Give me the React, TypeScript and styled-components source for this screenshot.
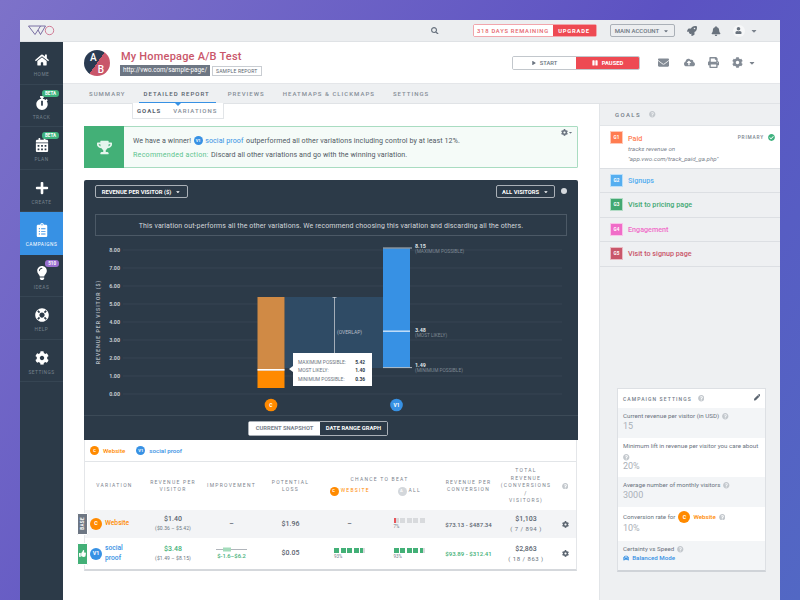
import React from 'react'
import styled, { createGlobalStyle } from 'styled-components'
import {
  FaBell, FaCalendarAlt, FaCar, FaCaretDown, FaCheckCircle, FaClipboardList, FaCloudUploadAlt, FaCog,
  FaEnvelope, FaHome, FaLifeRing, FaLightbulb, FaPause, FaPen, FaPlay, FaPlus, FaPrint, FaQuestionCircle,
  FaRocket, FaSearch, FaStopwatch, FaThumbsUp, FaTrophy, FaUser,
} from 'react-icons/fa'

const GlobalStyle = createGlobalStyle`
  html, body { margin: 0; padding: 0; height: 600px; overflow: hidden; }
  body {
    background: linear-gradient(125deg, #7d72c9 0%, #5c52c2 55%, #5268c4 100%);
    font-family: Roboto, "Liberation Sans", sans-serif;
    color: #5b6570;
  }
  * { box-sizing: border-box; }
`

const Page = styled.div`
  padding: 20px 20px 0;
  height: 600px;
`

const Shell = styled.div`
  width: 760px;
  height: 580px;
  background: #fff;
  display: flex;
  flex-direction: column;
  overflow: hidden;
`

const TopBar = styled.div`
  height: 22px;
  flex: none;
  background: #eceef0;
  border-bottom: 1px solid #dfe2e5;
  display: flex;
  align-items: center;
  padding-left: 8px;
  color: #6b7480;
`

const SearchIcon = styled(FaSearch)`
  font-size: 7.5px;
  margin-left: 376px;
`

const Trial = styled.div`
  margin-left: 34px;
  width: 124px;
  height: 13px;
  display: flex;
  border: 1px solid #f1a6ac;
  border-radius: 2px;
  font-size: 5.8px;
  letter-spacing: 0.75px;
  font-weight: 500;
`

const TrialDays = styled.div`
  flex: 1;
  background: #fff;
  color: #e5646c;
  display: flex;
  align-items: center;
  justify-content: center;
`

const TrialUpgrade = styled.div`
  width: 43px;
  background: #ee4a53;
  color: #fff;
  font-weight: 700;
  display: flex;
  align-items: center;
  justify-content: center;
`

const AccountButton = styled.div`
  margin-left: 13px;
  width: 65px;
  height: 13px;
  border: 1px solid #aab0b7;
  border-radius: 2px;
  font-size: 6px;
  font-weight: 500;
  display: flex;
  align-items: center;
  justify-content: center;
  gap: 4px;
`

const TopIcon = styled.span<{ $gap: number }>`
  margin-left: ${p => p.$gap}px;
  font-size: 10px;
  display: flex;
  align-items: center;
  color: #69727d;
`

const UserDisc = styled.span`
  width: 12px;
  height: 12px;
  margin-left: 12px;
  border-radius: 50%;
  background: #f6f7f8;
  display: flex;
  align-items: center;
  justify-content: center;
  font-size: 7px;
  color: #69727d;
`

const Caret = styled(FaCaretDown)`
  font-size: 8px;
  margin-left: 5px;
  color: #7b838d;
`

const Body = styled.div`
  flex: 1;
  display: flex;
  min-height: 0;
`

const Sidebar = styled.nav`
  width: 43px;
  flex: none;
  background: #2c3a48;
`

const NavItem = styled.div<{ $active?: boolean }>`
  position: relative;
  height: 42.5px;
  display: flex;
  flex-direction: column;
  align-items: center;
  padding-top: 11px;
  background: ${p => (p.$active ? '#3791e4' : 'transparent')};
  border-bottom: 1px solid ${p => (p.$active ? '#3791e4' : '#364553')};
  color: #fff;
  font-size: 14px;
  svg { display: block; height: 14px; }
`

const NavLabel = styled.span<{ $active?: boolean }>`
  margin-top: 5px;
  font-size: 4.8px;
  letter-spacing: 0.5px;
  color: ${p => (p.$active ? '#fff' : '#76828e')};
`

const NavBadge = styled.span<{ $purple?: boolean }>`
  position: absolute;
  top: 5px;
  right: 4px;
  height: 7px;
  padding: 0 3px;
  border-radius: 3px;
  font-size: 4.5px;
  line-height: 7px;
  font-weight: 700;
  color: #fff;
  background: ${p => (p.$purple ? '#9a6fd0' : '#3fb27f')};
`

const Main = styled.div`
  flex: 1;
  min-width: 0;
  display: flex;
  flex-direction: column;
`

const Header = styled.header`
  height: 42px;
  flex: none;
  border-bottom: 1px solid #e4e6e9;
  display: flex;
  align-items: center;
  padding-left: 21px;
`

const Avatar = styled.div`
  position: relative;
  width: 26px;
  height: 26px;
  border-radius: 50%;
  flex: none;
  background: linear-gradient(125deg, #2a3b52 50%, #c9566a 50%);
  color: #fff;
  font-size: 10px;
  font-weight: 500;
`

const AvatarA = styled.span`
  position: absolute;
  left: 6px;
  top: 2px;
`

const AvatarB = styled.span`
  position: absolute;
  right: 6px;
  bottom: 1px;
`

const TitleBlock = styled.div`
  margin-left: 10px;
  width: 392px;
`

const Title = styled.div`
  margin: 1px 0 0 1px;
  font-size: 11px;
  font-weight: 500;
  letter-spacing: 0.2px;
  color: #c9566a;
  line-height: 14px;
`

const UrlRow = styled.div`
  display: flex;
  align-items: center;
  gap: 2px;
`

const UrlTag = styled.span`
  height: 11px;
  padding: 0 3px;
  background: #6d7683;
  color: #fff;
  font-size: 6.3px;
  line-height: 11px;
`

const SampleTag = styled.span`
  height: 10px;
  margin-top: 2px;
  padding: 0 3px;
  border: 1px solid #c9cdd2;
  font-size: 5px;
  line-height: 8px;
  letter-spacing: 0.2px;
`

const StatusToggle = styled.div`
  width: 128px;
  height: 14px;
  display: flex;
  border: 1px solid #c2c7cc;
  border-radius: 2px;
  overflow: hidden;
  font-size: 5.8px;
  font-weight: 500;
`

const StatusPart = styled.div<{ $on?: boolean }>`
  flex: 1;
  display: flex;
  align-items: center;
  justify-content: center;
  gap: 4px;
  background: ${p => (p.$on ? '#ee4a53' : '#fff')};
  color: ${p => (p.$on ? '#fff' : '#6b7480')};
  font-weight: ${p => (p.$on ? 700 : 500)};
`

const HeadIcon = styled.span<{ $gap: number }>`
  margin-left: ${p => p.$gap}px;
  font-size: 11px;
  display: flex;
  align-items: center;
  color: #838b95;
`

const Tabs = styled.div`
  height: 20px;
  flex: none;
  background: #eef0f2;
  border-bottom: 1px solid #e0e3e6;
  display: flex;
  padding-left: 26px;
  gap: 18px;
`

const Tab = styled.div<{ $active?: boolean }>`
  position: relative;
  height: 19px;
  line-height: 19px;
  font-size: 6px;
  font-weight: 500;
  letter-spacing: 1.02px;
  color: ${p => (p.$active ? '#56606b' : '#858d97')};
  ${p => p.$active && `
    &::after {
      content: '';
      position: absolute;
      left: -5px;
      right: -6px;
      bottom: -0.5px;
      height: 2px;
      background: #3791e4;
    }
  `}
`

const Content = styled.div`
  flex: 1;
  display: flex;
  min-height: 0;
`

const Report = styled.div`
  width: 536px;
  flex: none;
  padding: 0 21px;
`

const SubTabs = styled.div`
  position: relative;
  width: 92px;
  height: 16px;
  margin-left: 48px;
  margin-top: -1px;
  background: #fff;
  border: 1px solid #e2e5e8;
  border-top: none;
  display: flex;
  align-items: center;
  padding-left: 4px;
  gap: 12px;
  font-size: 6px;
  letter-spacing: 1px;
  font-weight: 500;
  color: #858d97;
  &::before {
    content: '';
    position: absolute;
    left: 42px;
    top: 0;
    border: 3px solid transparent;
    border-top-color: #3791e4;
  }
`

const SubTabGoals = styled.span`
  font-weight: 700;
  color: #56606b;
`

const Winner = styled.div`
  height: 42px;
  margin-top: 7px;
  display: flex;
  position: relative;
  background: #f5fbf8;
  border: 1px solid #a9dcc1;
  border-radius: 1px;
`

const WinnerBadge = styled.div`
  width: 40px;
  margin: -1px 0 -1px -1px;
  background: #43b077;
  color: #e6f5ed;
  font-size: 15px;
  display: flex;
  align-items: center;
  justify-content: center;
`

const WinnerText = styled.div`
  padding: 7px 0 0 9px;
  font-size: 7.1px;
  line-height: 13.5px;
  letter-spacing: 0.08px;
  color: #505a64;
`

const WinnerLine = styled.div`
  display: flex;
  align-items: center;
  gap: 2.5px;
`

const Recommended = styled.span`
  color: #5cc48f;
  letter-spacing: 0.25px;
`

const LinkText = styled.span`
  color: #3791e4;
`

const WinnerGear = styled.span`
  position: absolute;
  right: 4px;
  top: 2px;
  font-size: 7px;
  color: #6b7480;
  display: flex;
  align-items: center;
`

const Dot = styled.span<{ $color: string; $size?: number }>`
  flex: none;
  width: ${p => p.$size ?? 9}px;
  height: ${p => p.$size ?? 9}px;
  border-radius: 50%;
  background: ${p => p.$color};
  color: #fff;
  font-size: ${p => (p.$size ?? 9) * 0.45}px;
  font-weight: 700;
  display: inline-flex;
  align-items: center;
  justify-content: center;
`

const ChartPanel = styled.section`
  margin-top: 12px;
  height: 260px;
  background: #2c3a48;
  border-radius: 2px 2px 0 0;
  color: #fff;
`

const ChartControls = styled.div`
  height: 34px;
  padding: 5px 0 0 11px;
  display: flex;
  align-items: flex-start;
`

const SelectBox = styled.div<{ $width: number }>`
  width: ${p => p.$width}px;
  height: 13px;
  border: 1px solid #aab0b7;
  border-radius: 2px;
  font-size: 5.8px;
  font-weight: 700;
  display: flex;
  align-items: center;
  justify-content: center;
  gap: 4px;
`

const ControlSpacer = styled.div`
  width: 308px;
  flex: none;
`

const InfoDot = styled.span`
  width: 6px;
  height: 6px;
  margin: 3px 0 0 6px;
  border-radius: 50%;
  background: #d5d9dd;
`

const Notice = styled.div`
  height: 22px;
  margin: 0 11px;
  border: 1px solid #4c5966;
  font-size: 7.03px;
  letter-spacing: 0.1px;
  color: #d3d7db;
  display: flex;
  align-items: center;
  justify-content: center;
`

const ChartArea = styled.div`
  position: relative;
  height: 180px;
  border-bottom: 1px solid #3c4a57;
  svg { display: block; }
`

const Tip = styled.div`
  position: absolute;
  left: 209px;
  top: 117px;
  width: 79px;
  height: 33px;
  background: #fff;
  padding: 5px 7px 0 5px;
  font-size: 4.9px;
  line-height: 8.4px;
  color: #6b7480;
  &::before {
    content: '';
    position: absolute;
    left: -4px;
    top: 13px;
    border: 2px solid transparent;
    border-right-color: #fff;
    border-width: 3px 4px 3px 0;
  }
`

const TipRow = styled.div`
  display: flex;
  justify-content: space-between;
  b { color: #2c3a48; font-weight: 700; }
`

const ChartFoot = styled.div`
  height: 24px;
  display: flex;
  padding: 5px 0 0 164px;
`

const SnapshotToggle = styled.div`
  width: 140px;
  height: 14.5px;
  display: flex;
  border: 1px solid #aab0b7;
  border-radius: 2px;
  font-size: 5.8px;
  font-weight: 700;
`

const SnapshotPart = styled.div<{ $on?: boolean; $width: number }>`
  width: ${p => p.$width}px;
  background: ${p => (p.$on ? '#fff' : '#2c3a48')};
  color: ${p => (p.$on ? '#7b838d' : '#fff')};
  display: flex;
  align-items: center;
  justify-content: center;
`

const TableCard = styled.div`
  position: relative;
  width: 493px;
  border: 1px solid #e4e6e9;
  border-top: none;
  border-bottom: 2px solid #d5d8dc;
`

const Legend = styled.div`
  height: 22px;
  border-bottom: 1px solid #e2e5e8;
  display: flex;
  align-items: center;
  padding-left: 5px;
  gap: 4px;
  font-size: 6.2px;
  font-weight: 500;
`

const NameText = styled.span<{ $color: string }>`
  color: ${p => p.$color};
  font-weight: 500;
`

const LegendGap = styled.span`
  width: 3px;
`

const TableGrid = styled.div<{ $height: number; $shade?: boolean }>`
  display: grid;
  grid-template-columns: 59px 58px 59px 59px 59px 60px 59px 56px 22px;
  height: ${p => p.$height}px;
  background: ${p => (p.$shade ? '#f3f4f6' : '#fff')};
  align-items: center;
`

const HeadCell = styled.div`
  text-align: center;
  font-size: 5px;
  line-height: 7.4px;
  letter-spacing: 1.25px;
  color: #7b838d;
`

const BeatCell = styled.div`
  grid-column: span 2;
  text-align: center;
  font-size: 5px;
  letter-spacing: 1.25px;
  line-height: 7.3px;
  color: #7b838d;
`

const BeatRow = styled.div`
  display: flex;
  margin-top: 3px;
`

const BeatOption = styled.div<{ $color: string }>`
  flex: 1;
  display: flex;
  align-items: center;
  justify-content: center;
  gap: 2px;
  color: ${p => p.$color};
`

const NameCell = styled.div`
  display: flex;
  align-items: center;
  gap: 3px;
  padding-left: 5px;
  font-size: 6.7px;
  line-height: 9.5px;
`

const ValueCell = styled.div<{ $green?: boolean; $size?: number }>`
  text-align: center;
  font-size: ${p => p.$size ?? 7}px;
  font-weight: 500;
  line-height: 9px;
  color: ${p => (p.$green ? '#43b077' : '#5b6570')};
  small {
    display: block;
    font-size: 5px;
    font-weight: 400;
    letter-spacing: 0.1px;
    color: #6b7480;
  }
`

const ExtraLine = styled.small`
  font-size: 6px !important;
  letter-spacing: 0.5px !important;
`

const SideTag = styled.div<{ $color: string; $top: number }>`
  position: absolute;
  left: -8px;
  top: ${p => p.$top}px;
  width: 11px;
  height: 21.5px;
  border-radius: 1px;
  background: ${p => p.$color};
  border: 1px solid #fff;
  color: #fff;
  font-size: 7px;
  display: flex;
  align-items: center;
  justify-content: center;
`

const SideTagText = styled.span`
  font-size: 4.6px;
  font-weight: 700;
  letter-spacing: 0.3px;
  transform: rotate(-90deg);
`

const MiniRange = styled.svg`
  display: block;
  margin: 0 auto;
`

const RangeText = styled.div`
  font-size: 5.8px;
  font-weight: 500;
  color: #43b077;
`

const ChanceWrap = styled.div`
  width: 31px;
  margin: 0 auto;
  font-size: 4.5px;
  line-height: 5.5px;
  color: #737c87;
`

const Segments = styled.div`
  display: flex;
  gap: 1.5px;
  margin-bottom: 1px;
`

const Segment = styled.span<{ $fill: number; $color: string }>`
  width: 5px;
  height: 5px;
  background: linear-gradient(to right, ${p => p.$color} ${p => p.$fill}%, #d8dadd ${p => p.$fill}%);
`

const GearCell = styled.div`
  display: flex;
  justify-content: center;
  font-size: 7px;
  color: #5b6570;
`

const GoalsCol = styled.aside`
  flex: 1;
  background: #eef0f2;
  border-left: 1px solid #e2e5e8;
`

const GoalsTitle = styled.div`
  height: 22px;
  border-bottom: 1px solid #e2e5e8;
  display: flex;
  align-items: center;
  gap: 8px;
  padding-left: 15px;
  font-size: 6px;
  font-weight: 500;
  letter-spacing: 1.4px;
  color: #737c87;
`

const Help = styled(FaQuestionCircle)`
  flex: none;
  font-size: 6.5px;
  color: #c3c8cd;
`

const GoalRow = styled.div<{ $active?: boolean }>`
  position: relative;
  height: ${p => (p.$active ? 42.5 : 24.5)}px;
  background: ${p => (p.$active ? '#fff' : 'transparent')};
  border-bottom: 1px solid #dcdfe3;
  display: flex;
  align-items: ${p => (p.$active ? 'flex-start' : 'center')};
  padding: ${p => (p.$active ? '5px 0 0 10px' : '0 0 0 10px')};
`

const GoalSquare = styled.span<{ $color: string }>`
  flex: none;
  width: 13px;
  height: 13px;
  background: ${p => p.$color};
  border: 1px solid rgba(255, 255, 255, 0.6);
  color: #fff;
  font-size: 4.6px;
  font-weight: 700;
  display: flex;
  align-items: center;
  justify-content: center;
`

const GoalName = styled.span<{ $color: string }>`
  margin-left: 5px;
  font-size: 7.2px;
  font-weight: 500;
  color: ${p => p.$color};
`

const GoalBlock = styled.div`
  line-height: 9px;
`

const GoalNote = styled.div`
  margin: 2px 0 0 5px;
  font-size: 6.2px;
  line-height: 9.5px;
  font-style: italic;
  color: #7b838d;
`

const Primary = styled.span`
  position: absolute;
  right: 5px;
  top: 8px;
  display: flex;
  align-items: center;
  gap: 4px;
  font-size: 4.8px;
  font-weight: 500;
  letter-spacing: 0.8px;
  color: #7b838d;
  svg { font-size: 7px; color: #3fb27f; }
`

const SettingsCard = styled.div`
  width: 149px;
  margin: 121.5px 0 0 17px;
  background: #fff;
  border: 1px solid #dde0e4;
  border-bottom: 2px solid #cfd3d8;
`

const SettingsHead = styled.div`
  position: relative;
  height: 19px;
  display: flex;
  align-items: center;
  gap: 6px;
  padding-left: 5px;
  font-size: 5px;
  font-weight: 500;
  letter-spacing: 1.1px;
  color: #737c87;
`

const EditIcon = styled(FaPen)`
  position: absolute;
  right: 5px;
  top: 5px;
  font-size: 6.5px;
  color: #5b6570;
`

const SettingRow = styled.div<{ $shade?: boolean; $height: number }>`
  height: ${p => p.$height}px;
  padding: 4px 5px 0;
  background: ${p => (p.$shade ? '#f3f5f7' : '#fff')};
  font-size: 6.2px;
  line-height: 9px;
  color: #6b7480;
`

const SettingLabel = styled.div`
  display: flex;
  align-items: center;
  gap: 3px;
  flex-wrap: wrap;
`

const SettingValue = styled.div`
  font-size: 9px;
  line-height: 11px;
  color: #aab0b7;
`

const ModeRow = styled.div`
  display: flex;
  align-items: center;
  gap: 3px;
  font-weight: 500;
  color: #3791e4;
`

const NAV = [
  { label: 'HOME', icon: <FaHome /> },
  { label: 'TRACK', icon: <FaStopwatch />, badge: 'BETA' },
  { label: 'PLAN', icon: <FaCalendarAlt />, badge: 'BETA' },
  { label: 'CREATE', icon: <FaPlus /> },
  { label: 'CAMPAIGNS', icon: <FaClipboardList />, active: true },
  { label: 'IDEAS', icon: <FaLightbulb />, badge: '510', purple: true },
  { label: 'HELP', icon: <FaLifeRing /> },
  { label: 'SETTINGS', icon: <FaCog /> },
]

const GOALS = [
  { id: 'G2', name: 'Signups', square: '#55aef0', color: '#55aef0' },
  { id: 'G3', name: 'Visit to pricing page', square: '#43a872', color: '#43a872' },
  { id: 'G4', name: 'Engagement', square: '#f06cc8', color: '#f06cc8' },
  { id: 'G5', name: 'Visit to signup page', square: '#c9566a', color: '#c9566a' },
]

const ChanceBar = ({ percent, color }: { percent: number; color: string }) => (
  <ChanceWrap>
    <Segments>
      {[0, 1, 2, 3, 4].map(i => (
        <Segment
          key={i}
          $color={color}
          $fill={Math.max(0, Math.min(100, (percent - i * 20) * 5))}
        />
      ))}
    </Segments>
    {percent}%
  </ChanceWrap>
)

const Logo = () => (
  <svg width="27" height="11" viewBox="0 0 27 11" fill="none">
    <path d="M0.5 1 L7 9.5 L10 5 L12.5 9.5 L17.5 1 H0.5" stroke="#5d4f8f" strokeWidth="0.8" />
    <path d="M10 5 L12.5 1" stroke="#5d4f8f" strokeWidth="0.8" />
    <circle cx="21.5" cy="5.5" r="4.2" stroke="#c9607f" strokeWidth="0.8" />
  </svg>
)

const TICKS = ['8.00', '7.00', '6.00', '5.00', '4.00', '3.00', '2.00', '1.00', '0.00']

const Chart = () => (
  <svg width="494" height="180" viewBox="84 236 494 180" fontFamily="Roboto, sans-serif">
    {TICKS.map((t, i) => (
      <g key={t}>
        <line x1="123" x2="562" y1={250 + i * 18} y2={250 + i * 18} stroke="#3a4857" strokeWidth="0.8" />
        <text x="120" y={252 + i * 18} textAnchor="end" fontSize="5.4" fontWeight="700" fill="#c5cad0">{t}</text>
      </g>
    ))}
    <text
      transform="translate(100 322) rotate(-90)"
      textAnchor="middle"
      fontSize="5.2"
      fontWeight="500"
      letterSpacing="1"
      fill="#b9bfc6"
    >
      REVENUE PER VISITOR ($)
    </text>
    <rect x="284.5" y="297" width="98.5" height="71" fill="#2f4b65" />
    <rect x="257.5" y="297" width="27" height="74" fill="#d08a45" />
    <rect x="257.5" y="371" width="27" height="17" fill="#ff8a00" />
    <rect x="257.5" y="369" width="27" height="1.6" fill="#fff" />
    <rect x="383" y="248.5" width="27" height="119" fill="#3791e4" />
    <rect x="383" y="330.5" width="27" height="1.4" fill="#cfe5fa" />
    <line x1="383" x2="412" y1="248" y2="248" stroke="#d5d9dd" strokeWidth="0.8" />
    <line x1="383" x2="412" y1="367.6" y2="367.6" stroke="#d5d9dd" strokeWidth="0.8" />
    <line x1="334.5" x2="334.5" y1="297" y2="354" stroke="#d5d9dd" strokeWidth="0.7" />
    <line x1="332.5" x2="336.5" y1="297.5" y2="297.5" stroke="#d5d9dd" strokeWidth="0.7" />
    <text x="337" y="334" fontSize="5" fill="#b9bfc6">(OVERLAP)</text>
    <text x="415" y="248" fontSize="5.4" fontWeight="700" fill="#dfe2e5">8.15</text>
    <text x="415" y="253" fontSize="4.8" fill="#7f8994">(MAXIMUM POSSIBLE)</text>
    <text x="415" y="332" fontSize="5.4" fontWeight="700" fill="#dfe2e5">3.48</text>
    <text x="415" y="337" fontSize="4.8" fill="#7f8994">(MOST LIKELY)</text>
    <text x="415" y="367" fontSize="5.4" fontWeight="700" fill="#dfe2e5">1.49</text>
    <text x="415" y="372" fontSize="4.8" fill="#7f8994">(MINIMUM POSSIBLE)</text>
    <circle cx="271" cy="405" r="6.3" fill="#ff8a00" />
    <text x="271" y="407" textAnchor="middle" fontSize="5" fontWeight="700" fill="#fff">C</text>
    <circle cx="396.5" cy="405" r="6.3" fill="#3791e4" />
    <text x="396.5" y="407" textAnchor="middle" fontSize="5" fontWeight="700" fill="#fff">V1</text>
  </svg>
)

const App = () => (
  <>
    <GlobalStyle />
    <Page>
      <Shell>
        <TopBar>
          <Logo />
          <SearchIcon />
          <Trial>
            <TrialDays>318 DAYS REMAINING</TrialDays>
            <TrialUpgrade>UPGRADE</TrialUpgrade>
          </Trial>
          <AccountButton>MAIN ACCOUNT <FaCaretDown /></AccountButton>
          <TopIcon $gap={12}><FaRocket /></TopIcon>
          <TopIcon $gap={14}><FaBell /></TopIcon>
          <UserDisc><FaUser /></UserDisc>
          <Caret />
        </TopBar>
        <Body>
          <Sidebar>
            {NAV.map(n => (
              <NavItem key={n.label} $active={n.active}>
                {n.icon}
                <NavLabel $active={n.active}>{n.label}</NavLabel>
                {n.badge && <NavBadge $purple={n.purple}>{n.badge}</NavBadge>}
              </NavItem>
            ))}
          </Sidebar>
          <Main>
            <Header>
              <Avatar>
                <AvatarA>A</AvatarA>
                <AvatarB>B</AvatarB>
              </Avatar>
              <TitleBlock>
                <Title>My Homepage A/B Test</Title>
                <UrlRow>
                  <UrlTag>http://vwo.com/sample-page/</UrlTag>
                  <SampleTag>SAMPLE REPORT</SampleTag>
                </UrlRow>
              </TitleBlock>
              <StatusToggle>
                <StatusPart><FaPlay size={4} /> START</StatusPart>
                <StatusPart $on><FaPause size={6} /> PAUSED</StatusPart>
              </StatusToggle>
              <HeadIcon $gap={18}><FaEnvelope /></HeadIcon>
              <HeadIcon $gap={15}><FaCloudUploadAlt /></HeadIcon>
              <HeadIcon $gap={13}><FaPrint /></HeadIcon>
              <HeadIcon $gap={13}><FaCog /></HeadIcon>
              <Caret />
            </Header>
            <Tabs>
              <Tab>SUMMARY</Tab>
              <Tab $active>DETAILED REPORT</Tab>
              <Tab>PREVIEWS</Tab>
              <Tab>HEATMAPS &amp; CLICKMAPS</Tab>
              <Tab>SETTINGS</Tab>
            </Tabs>
            <Content>
              <Report>
                <SubTabs>
                  <SubTabGoals>GOALS</SubTabGoals>
                  <span>VARIATIONS</span>
                </SubTabs>
                <Winner>
                  <WinnerBadge><FaTrophy /></WinnerBadge>
                  <WinnerText>
                    <WinnerLine>
                      We have a winner! <Dot $color="#3791e4">V1</Dot>
                      <LinkText>social proof</LinkText> outperformed all other variations including control by at least 12%.
                    </WinnerLine>
                    <WinnerLine>
                      <Recommended>Recommended action:</Recommended> Discard all other variations and go with the winning variation.
                    </WinnerLine>
                  </WinnerText>
                  <WinnerGear><FaCog /><FaCaretDown size={5} /></WinnerGear>
                </Winner>
                <ChartPanel>
                  <ChartControls>
                    <SelectBox $width={93}>REVENUE PER VISITOR ($) <FaCaretDown /></SelectBox>
                    <ControlSpacer />
                    <SelectBox $width={59}>ALL VISITORS <FaCaretDown /></SelectBox>
                    <InfoDot />
                  </ChartControls>
                  <Notice>
                    This variation out-performs all the other variations. We recommend choosing this variation and discarding all the others.
                  </Notice>
                  <ChartArea>
                    <Chart />
                    <Tip>
                      <TipRow>MAXIMUM POSSIBLE: <b>5.42</b></TipRow>
                      <TipRow>MOST LIKELY: <b>1.40</b></TipRow>
                      <TipRow>MINIMUM POSSIBLE: <b>0.36</b></TipRow>
                    </Tip>
                  </ChartArea>
                  <ChartFoot>
                    <SnapshotToggle>
                      <SnapshotPart $on $width={71}>CURRENT SNAPSHOT</SnapshotPart>
                      <SnapshotPart $width={67}>DATE RANGE GRAPH</SnapshotPart>
                    </SnapshotToggle>
                  </ChartFoot>
                </ChartPanel>
                <TableCard>
                  <Legend>
                    <Dot $color="#ff8a00">C</Dot>
                    <NameText $color="#ff8a00">Website</NameText>
                    <LegendGap />
                    <Dot $color="#3791e4">V1</Dot>
                    <NameText $color="#3791e4">social proof</NameText>
                  </Legend>
                  <TableGrid $height={48}>
                    <HeadCell>VARIATION</HeadCell>
                    <HeadCell>REVENUE PER<br />VISITOR</HeadCell>
                    <HeadCell>IMPROVEMENT</HeadCell>
                    <HeadCell>POTENTIAL<br />LOSS</HeadCell>
                    <BeatCell>
                      CHANCE TO BEAT
                      <BeatRow>
                        <BeatOption $color="#ff8a00"><Dot $color="#ff8a00">C</Dot> WEBSITE</BeatOption>
                        <BeatOption $color="#7b838d"><Dot $color="#d3d7db">A</Dot> ALL</BeatOption>
                      </BeatRow>
                    </BeatCell>
                    <HeadCell>REVENUE PER<br />CONVERSION</HeadCell>
                    <HeadCell>TOTAL<br />REVENUE<br />(CONVERSIONS<br />/<br />VISITORS)</HeadCell>
                    <GearCell><Help /></GearCell>
                  </TableGrid>
                  <TableGrid $height={28} $shade>
                    <NameCell>
                      <Dot $color="#ff8a00" $size={12}>C</Dot>
                      <NameText $color="#ff8a00">Website</NameText>
                    </NameCell>
                    <ValueCell>$1.40<small>($0.36 – $5.42)</small></ValueCell>
                    <ValueCell>–</ValueCell>
                    <ValueCell>$1.96</ValueCell>
                    <ValueCell>–</ValueCell>
                    <ChanceBar percent={7} color="#e8545a" />
                    <ValueCell $size={6.1}>$73.13 - $487.34</ValueCell>
                    <ValueCell>$1,103<ExtraLine>( 7 / 894 )</ExtraLine></ValueCell>
                    <GearCell><FaCog /></GearCell>
                  </TableGrid>
                  <TableGrid $height={31}>
                    <NameCell>
                      <Dot $color="#3791e4" $size={12}>V1</Dot>
                      <NameText $color="#3791e4">social<br />proof</NameText>
                    </NameCell>
                    <ValueCell $green>$3.48<small>($1.49 – $8.15)</small></ValueCell>
                    <ValueCell>
                      <MiniRange width="32" height="5" viewBox="0 0 32 5">
                        <line x1="0" x2="31" y1="2.5" y2="2.5" stroke="#7b838d" strokeWidth="0.6" />
                        <rect x="7" y="0.5" width="8" height="4" fill="#a3dcbb" />
                      </MiniRange>
                      <RangeText>$-1.6–$6.2</RangeText>
                    </ValueCell>
                    <ValueCell>$0.05</ValueCell>
                    <ChanceBar percent={93} color="#43b077" />
                    <ChanceBar percent={93} color="#43b077" />
                    <ValueCell $green $size={6.1}>$93.89 - $312.41</ValueCell>
                    <ValueCell>$2,863<ExtraLine>( 18 / 863 )</ExtraLine></ValueCell>
                    <GearCell><FaCog /></GearCell>
                  </TableGrid>
                  <SideTag $color="#6d7683" $top={73}><SideTagText>BASE</SideTagText></SideTag>
                  <SideTag $color="#43b077" $top={103}><FaThumbsUp /></SideTag>
                </TableCard>
              </Report>
              <GoalsCol>
                <GoalsTitle>GOALS <Help /></GoalsTitle>
                <GoalRow $active>
                  <GoalSquare $color="#ff7c50">G1</GoalSquare>
                  <GoalBlock>
                    <GoalName $color="#ff7c50">Paid</GoalName>
                    <GoalNote>tracks revenue on<br />"app.vwo.com/track_paid_ga.php"</GoalNote>
                  </GoalBlock>
                  <Primary>PRIMARY <FaCheckCircle /></Primary>
                </GoalRow>
                {GOALS.map(g => (
                  <GoalRow key={g.id}>
                    <GoalSquare $color={g.square}>{g.id}</GoalSquare>
                    <GoalName $color={g.color}>{g.name}</GoalName>
                  </GoalRow>
                ))}
                <SettingsCard>
                  <SettingsHead>CAMPAIGN SETTINGS <Help /><EditIcon /></SettingsHead>
                  <SettingRow $shade $height={30}>
                    <SettingLabel>Current revenue per visitor (in USD) <Help /></SettingLabel>
                    <SettingValue>15</SettingValue>
                  </SettingRow>
                  <SettingRow $height={39}>
                    <SettingLabel>Minimum lift in revenue per visitor you care about <Help /></SettingLabel>
                    <SettingValue>20%</SettingValue>
                  </SettingRow>
                  <SettingRow $shade $height={30}>
                    <SettingLabel>Average number of monthly visitors <Help /></SettingLabel>
                    <SettingValue>3000</SettingValue>
                  </SettingRow>
                  <SettingRow $height={34}>
                    <SettingLabel>
                      Conversion rate for <Dot $color="#ff8a00" $size={12}>C</Dot>
                      <NameText $color="#ff8a00">Website</NameText> <Help />
                    </SettingLabel>
                    <SettingValue>10%</SettingValue>
                  </SettingRow>
                  <SettingRow $shade $height={29}>
                    <SettingLabel>Certainty vs Speed <Help /></SettingLabel>
                    <ModeRow><FaCar /> Balanced Mode</ModeRow>
                  </SettingRow>
                </SettingsCard>
              </GoalsCol>
            </Content>
          </Main>
        </Body>
      </Shell>
    </Page>
  </>
)

export default App
